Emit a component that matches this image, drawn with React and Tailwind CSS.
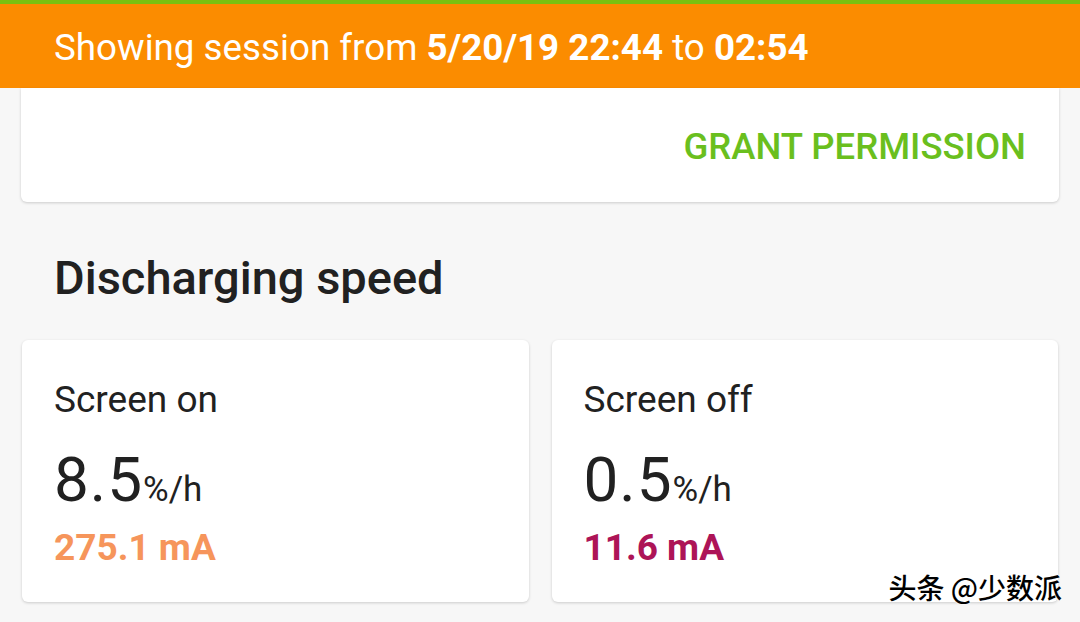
import React from 'react';

const SpeedCard = ({ label, value, current, color }) => (
  <div className="flex-1 h-[262px] bg-white rounded-[6px] shadow-[0_1px_3px_rgba(0,0,0,0.18)] pl-[32px] pt-[40px]">
    <div className="text-[37px] leading-[40px] text-[#212121]">{label}</div>
    <div className="mt-[30px] flex items-baseline text-[#212121] leading-[60px]">
      <span className="text-[62px] tracking-[1px]">{value}</span>
      <span className="text-[35px]">%/h</span>
    </div>
    <div className={`mt-[8px] text-[37px] leading-[40px] font-bold ${color}`}>{current}</div>
  </div>
);

export default function App() {
  return (
    <div className="relative w-[1080px] h-[622px] overflow-hidden bg-[#f7f7f7] font-['Roboto',sans-serif]">
      <div className="h-[4px] bg-[#79c110]" />
      <div className="h-[84px] bg-[#fb8c00] pl-[54px] pt-[4px] flex items-center text-white text-[36.75px]">
        <span>
          Showing session from <b className="font-bold">5/20/19 22:44</b> to <b className="font-bold">02:54</b>
        </span>
      </div>

      <div className="mx-[21px] h-[114px] bg-white rounded-b-[6px] shadow-[0_1px_3px_rgba(0,0,0,0.18)] flex items-center justify-end pr-[33px] pt-[4px]">
        <span className="text-[36.5px] font-medium text-[#6abf1e]">GRANT PERMISSION</span>
      </div>

      <h2 className="pl-[54px] mt-[48px] text-[47px] leading-[56px] font-medium text-[#212121]">Discharging speed</h2>

      <div className="mt-[34px] mx-[22px] flex gap-[23px]">
        <SpeedCard label="Screen on" value="8.5" current="275.1 mA" color="text-[#f6955b]" />
        <SpeedCard label="Screen off" value="0.5" current="11.6 mA" color="text-[#ad1457]" />
      </div>

      <div className="absolute right-[18px] bottom-[14px] text-[28px] font-medium text-black font-['Noto_Sans_CJK_SC',sans-serif] [text-shadow:0_0_2px_#fff,0_0_2px_#fff]">
        头条 @少数派
      </div>
    </div>
  );
}
